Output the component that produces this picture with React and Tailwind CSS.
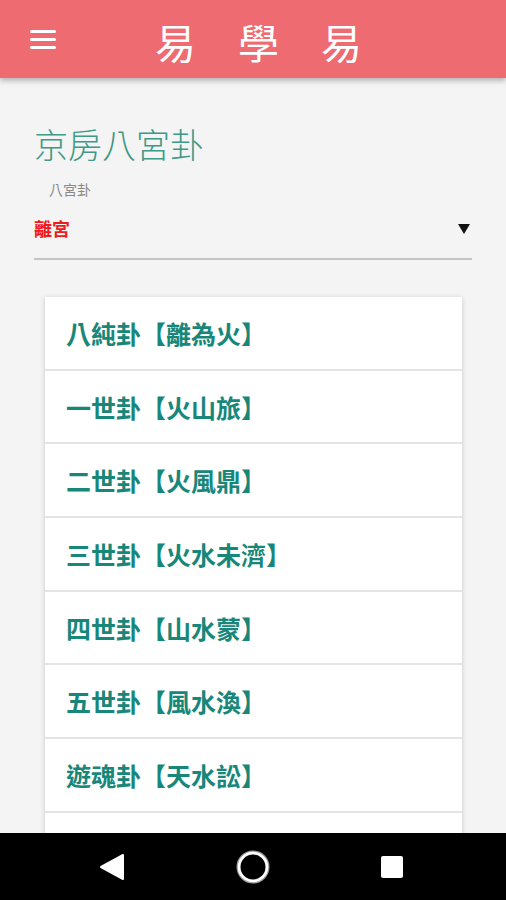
import React from 'react';

const ROWS = [
    '八純卦【離為火】',
    '一世卦【火山旅】',
    '二世卦【火風鼎】',
    '三世卦【火水未濟】',
    '四世卦【山水蒙】',
    '五世卦【風水渙】',
    '遊魂卦【天水訟】',
    '',
];

const font = { fontFamily: '"Noto Sans CJK TC", "Noto Sans", sans-serif' };

export default function App() {
    return (
        <div className="w-[506px] h-[900px] flex flex-col bg-[#f4f4f4] overflow-hidden" style={font}>
            {/* App bar */}
            <header className="h-[78px] shrink-0 bg-[#ee6b72] flex items-center px-[30px] shadow-[0_3px_5px_rgba(0,0,0,0.25)] relative z-10">
                <div className="w-[26px] flex flex-col gap-[5px]">
                    <span className="block h-[3px] bg-white rounded-sm" />
                    <span className="block h-[3px] bg-white rounded-sm" />
                    <span className="block h-[3px] bg-white rounded-sm" />
                </div>
                <div className="ml-[99px] flex gap-[42px] text-white text-[41px] leading-none mt-[4px]">
                    <span>易</span>
                    <span>學</span>
                    <span>易</span>
                </div>
            </header>

            {/* Content */}
            <main className="flex-1 min-h-0 overflow-hidden">
                <div className="px-[34px] pt-[44px]">
                    <h1 className="text-[34px] leading-[44px] text-[#3d9a86] font-light">京房八宮卦</h1>
                    <p className="mt-[14px] pl-[15px] text-[14px] leading-[18px] text-[#8a8a8a]">八宮卦</p>
                    <div className="mt-[18px] flex items-center justify-between pb-[18px] border-b-2 border-[#c4c4c4]">
                        <span className="text-[18px] leading-[24px] font-bold text-[#ee1c1c]">離宮</span>
                        <svg width="14" height="12" viewBox="0 0 14 12" className="mr-[1px] mt-[2px]">
                            <path d="M1 1 L13 1 L7 11 Z" fill="#111" />
                        </svg>
                    </div>
                </div>

                <div className="mx-[45px] w-[417px] mt-[37px] bg-white shadow-[0_1px_5px_rgba(0,0,0,0.18)]">
                    {ROWS.map((r, i) => (
                        <div key={i} className="h-[73.7px] flex items-center pl-[21px] border-b-2 border-[#e4e4e4]">
                            <span className="text-[25px] leading-[32px] font-bold text-[#18877a]">{r}</span>
                        </div>
                    ))}
                </div>
            </main>

            {/* Android nav bar */}
            <nav className="h-[67px] shrink-0 bg-black flex items-center pl-[98px] gap-[110px]">
                <svg width="28" height="30" viewBox="0 0 28 30">
                    <path d="M25 3 L25 27 L3 15 Z" fill="#fff" stroke="#fff" strokeWidth="2" strokeLinejoin="round" />
                </svg>
                <svg width="34" height="34" viewBox="0 0 34 34">
                    <circle cx="17" cy="17" r="14.5" fill="none" stroke="#9a9a9a" strokeWidth="4" />
                    <circle cx="17" cy="17" r="14" fill="none" stroke="#fff" strokeWidth="2.6" />
                </svg>
                <svg width="24" height="24" viewBox="0 0 24 24">
                    <rect x="1" y="1" width="22" height="22" rx="2" fill="#fff" />
                </svg>
            </nav>
        </div>
    );
}
